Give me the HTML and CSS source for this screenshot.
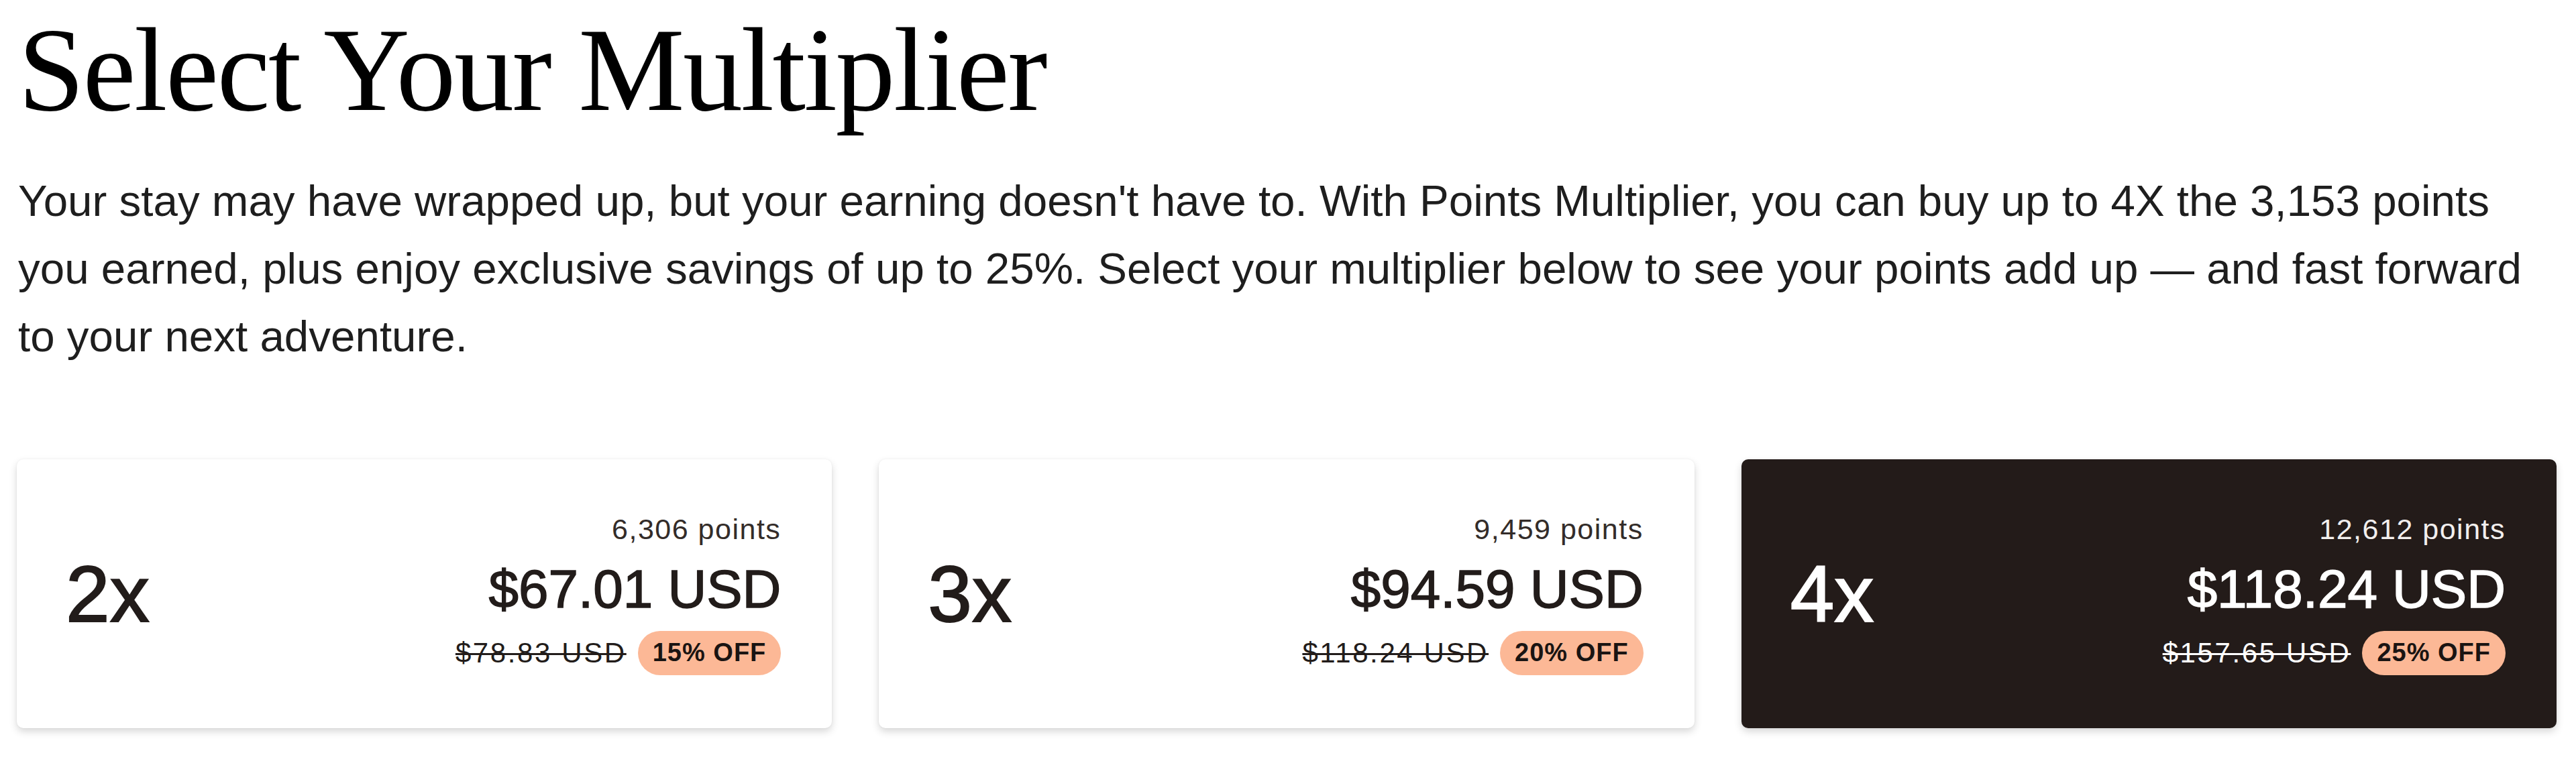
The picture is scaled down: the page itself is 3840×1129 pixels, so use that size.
FILE: index.html
```html
<!DOCTYPE html>
<html lang="en">
<head>
  <meta charset="UTF-8" />
  <meta name="viewport" content="width=device-width, initial-scale=1.0" />
  <title>Select Your Multiplier</title>
  <link rel="stylesheet" href="styles.css">
</head>
<body>
  <div class="page">
    <h1>Select Your Multiplier</h1>

    <p class="intro">Your stay may have wrapped up, but your earning doesn't have to. With Points Multiplier, you can buy up to 4X the 3,153 points you earned, plus enjoy exclusive savings of up to 25%. Select your multiplier below to see your points add up — and fast forward to your next adventure.</p>

    <div class="options">
      <div class="option">
        <div class="multiplier">2x</div>
        <div class="pricing">
          <div class="points">6,306 points</div>
          <div class="price">$67.01 USD</div>
          <div class="was">
            <span class="old-price">$78.83 USD</span>
            <span class="badge">15% OFF</span>
          </div>
        </div>
      </div>

      <div class="option">
        <div class="multiplier">3x</div>
        <div class="pricing">
          <div class="points">9,459 points</div>
          <div class="price">$94.59 USD</div>
          <div class="was">
            <span class="old-price">$118.24 USD</span>
            <span class="badge">20% OFF</span>
          </div>
        </div>
      </div>

      <div class="option selected">
        <div class="multiplier">4x</div>
        <div class="pricing">
          <div class="points">12,612 points</div>
          <div class="price">$118.24 USD</div>
          <div class="was">
            <span class="old-price">$157.65 USD</span>
            <span class="badge">25% OFF</span>
          </div>
        </div>
      </div>
    </div>
  </div>
</body>
</html>
```

FILE: styles.css
```css
body {
  margin: 0;
  background: #ffffff;
  font-family: "Liberation Sans", Arial, sans-serif;
  color: #221c1a;
}

.page {
  padding: 15px 29px 40px 25px;
}

h1 {
  margin: 0 0 56px 2px;
  font-family: "Liberation Serif", "Times New Roman", serif;
  font-weight: 400;
  font-size: 178px;
  line-height: 178px;
  letter-spacing: -2.5px;
  color: #000000;
}

.intro {
  margin: 0 0 133px 2px;
  font-size: 65.5px;
  line-height: 101px;
  color: #1e1e1e;
}

.options {
  display: grid;
  grid-template-columns: repeat(3, 1fr);
  gap: 70px;
}

.option {
  display: flex;
  align-items: center;
  justify-content: space-between;
  height: 401px;
  padding: 0 76px 0 73px;
  background: #ffffff;
  border-radius: 10px;
  box-shadow: 0 5px 12px rgba(0, 0, 0, 0.16), 0 0 3px rgba(0, 0, 0, 0.05);
}

.option.selected {
  background: #231b19;
  color: #ffffff;
}

.multiplier {
  font-size: 118px;
  line-height: 1;
  -webkit-text-stroke: 2px currentColor;
}

.pricing {
  display: flex;
  flex-direction: column;
  align-items: flex-end;
}

.points {
  font-size: 43px;
  line-height: 48px;
  letter-spacing: 1.5px;
  color: #332c29;
}

.selected .points {
  color: #f2efee;
}

.price {
  margin-top: 18px;
  font-size: 80px;
  line-height: 96px;
  -webkit-text-stroke: 1.5px currentColor;
}

.was {
  display: flex;
  align-items: center;
  gap: 17px;
  margin-top: 14px;
}

.old-price {
  font-size: 42px;
  line-height: 48px;
  letter-spacing: 2.6px;
  text-decoration: line-through;
  text-decoration-thickness: 3px;
}

.badge {
  display: flex;
  align-items: center;
  height: 66px;
  padding: 0 22px;
  border-radius: 33px;
  background: #fcb896;
  color: #1a1412;
  font-size: 38px;
  font-weight: 700;
  letter-spacing: 1px;
}
```
